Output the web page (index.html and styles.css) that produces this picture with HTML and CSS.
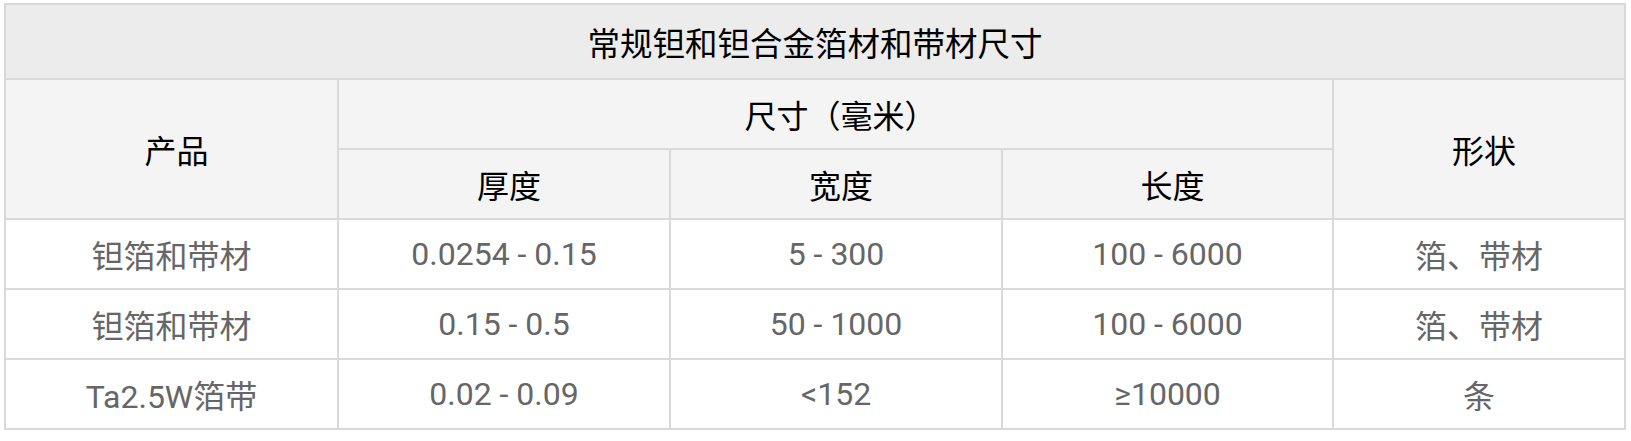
FILE: index.html
```html
<!DOCTYPE html>
<html lang="zh-CN">
<head>
<meta charset="utf-8">
<title>常规钽和钽合金箔材和带材尺寸</title>
<link rel="stylesheet" href="styles.css">
</head>
<body>
<table class="spec">
  <colgroup>
    <col class="c1"><col class="c2"><col class="c3"><col class="c4"><col class="c5">
  </colgroup>
  <thead>
    <tr class="r-title"><th colspan="5" class="title">常规钽和钽合金箔材和带材尺寸</th></tr>
    <tr class="r-head"><th rowspan="2" class="head">产品</th><th colspan="3" class="head">尺寸（毫米）</th><th rowspan="2" class="head">形状</th></tr>
    <tr class="r-head"><th class="head">厚度</th><th class="head">宽度</th><th class="head">长度</th></tr>
  </thead>
  <tbody>
    <tr class="r-data"><td>钽箔和带材</td><td>0.0254 - 0.15</td><td>5 - 300</td><td>100 - 6000</td><td>箔、带材</td></tr>
    <tr class="r-data"><td>钽箔和带材</td><td>0.15 - 0.5</td><td>50 - 1000</td><td>100 - 6000</td><td>箔、带材</td></tr>
    <tr class="r-data"><td>Ta2.5W箔带</td><td>0.02 - 0.09</td><td>&lt;152</td><td>≥10000</td><td>条</td></tr>
  </tbody>
</table>
</body>
</html>
```

FILE: styles.css
```css
html, body {
  margin: 0;
  padding: 0;
  background: #ffffff;
}
body {
  padding: 3px 0 0 4px;
  font-family: "Roboto", "Noto Sans CJK SC", sans-serif;
}
.spec {
  border-collapse: collapse;
  table-layout: fixed;
  width: 1620px;
  border: 2px solid #d9d9d9;
}
.c1 { width: 333px; }
.c2 { width: 332px; }
.c3 { width: 332px; }
.c4 { width: 331px; }
.c5 { width: 292px; }
.spec th, .spec td {
  border: 2px solid #d9d9d9;
  padding: 0;
  text-align: center;
  vertical-align: middle;
  font-weight: normal;
}
.r-title { height: 75px; }
.r-head { height: 70px; }
.r-data { height: 70px; }
.title {
  background: #ececec;
  color: #000;
  font-size: 32.5px;
  font-family: "Noto Sans CJK SC", sans-serif;
}
.spec .head {
  background: #f4f4f4;
  color: #000;
  font-size: 32px;
  padding-left: 10px;
  font-family: "Noto Sans CJK SC", sans-serif;
}
.spec td {
  background: #fff;
  color: #666666;
  font-size: 32px;
}
```
